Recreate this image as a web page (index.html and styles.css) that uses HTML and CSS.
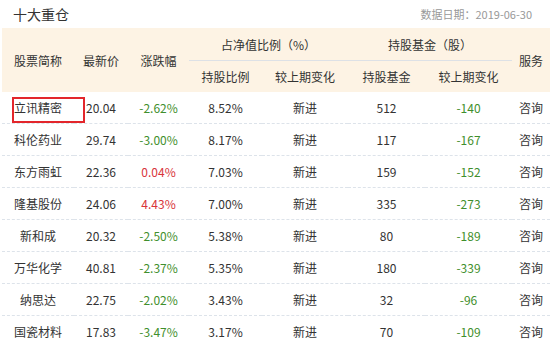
FILE: index.html
```html
<!DOCTYPE html>
<html lang="zh-CN">
<head>
<meta charset="utf-8">
<title>十大重仓</title>
<link rel="stylesheet" href="styles.css">
</head>
<body>
<div class="panel">
  <div class="top">
    <h2 class="title">十大重仓</h2>
    <span class="date">数据日期：2019-06-30</span>
  </div>
  <table class="grid">
    <colgroup>
      <col class="c1"><col class="c2"><col class="c3"><col class="c4"><col class="c5"><col class="c6"><col class="c7"><col class="c8">
    </colgroup>
    <thead>
      <tr class="h1">
        <th rowspan="2">股票简称</th>
        <th rowspan="2">最新价</th>
        <th rowspan="2">涨跌幅</th>
        <th colspan="2" class="grp">占净值比例（%）</th>
        <th colspan="2" class="grp">持股基金（股）</th>
        <th rowspan="2">服务</th>
      </tr>
      <tr class="h2">
        <th>持股比例</th>
        <th>较上期变化</th>
        <th>持股基金</th>
        <th>较上期变化</th>
      </tr>
    </thead>
    <tbody>
      <tr><td class="name"><span class="mark"></span>立讯精密</td><td>20.04</td><td class="down">-2.62%</td><td>8.52%</td><td>新进</td><td>512</td><td class="down">-140</td><td>咨询</td></tr>
      <tr><td class="name">科伦药业</td><td>29.74</td><td class="down">-3.00%</td><td>8.17%</td><td>新进</td><td>117</td><td class="down">-167</td><td>咨询</td></tr>
      <tr><td class="name">东方雨虹</td><td>22.36</td><td class="up">0.04%</td><td>7.03%</td><td>新进</td><td>159</td><td class="down">-152</td><td>咨询</td></tr>
      <tr><td class="name">隆基股份</td><td>24.06</td><td class="up">4.43%</td><td>7.00%</td><td>新进</td><td>335</td><td class="down">-273</td><td>咨询</td></tr>
      <tr><td class="name">新和成</td><td>20.32</td><td class="down">-2.50%</td><td>5.38%</td><td>新进</td><td>80</td><td class="down">-189</td><td>咨询</td></tr>
      <tr><td class="name">万华化学</td><td>40.81</td><td class="down">-2.37%</td><td>5.35%</td><td>新进</td><td>180</td><td class="down">-339</td><td>咨询</td></tr>
      <tr><td class="name">纳思达</td><td>22.75</td><td class="down">-2.02%</td><td>3.43%</td><td>新进</td><td>32</td><td class="down">-96</td><td>咨询</td></tr>
      <tr><td class="name">国瓷材料</td><td>17.83</td><td class="down">-3.47%</td><td>3.17%</td><td>新进</td><td>70</td><td class="down">-109</td><td>咨询</td></tr>
    </tbody>
  </table>
</div>
</body>
</html>
```
FILE: styles.css
```css
html, body {
  margin: 0;
  padding: 0;
  background: #ffffff;
}
body {
  font-family: "Noto Sans CJK SC", "Noto Sans", sans-serif;
  color: #333333;
  font-size: 12px;
}
.panel {
  width: 550px;
  overflow: hidden;
}
.top {
  display: flex;
  justify-content: space-between;
  align-items: center;
  height: 28px;
  padding: 0 18px 0 13px;
  box-sizing: border-box;
}
.title {
  margin: 0;
  font-size: 14px;
  font-weight: normal;
  line-height: 26px;
  color: #333333;
}
.date {
  font-size: 11px;
  color: #999999;
  line-height: 24px;
}
.grid {
  margin-left: 2px;
  width: 548px;
  table-layout: fixed;
  border-collapse: collapse;
}
.c1 { width: 72px; }
.c2 { width: 54px; }
.c3 { width: 61px; }
.c4 { width: 73px; }
.c5 { width: 86px; }
.c6 { width: 77px; }
.c7 { width: 87px; }
.c8 { width: 38px; }
thead th {
  background: #fdf3e4;
  font-weight: normal;
  text-align: center;
  padding: 0;
  white-space: nowrap;
}
.h1 th { height: 32px; }
.h2 th { height: 31px; }
th.grp {
  border-bottom: 1px solid #dde1e6;
}
tbody td {
  height: 31px;
  padding: 0;
  text-align: center;
  white-space: nowrap;
  border-bottom: 1px dashed #dde3ea;
}
tbody tr:last-child td {
  border-bottom: none;
}
td.name {
  position: relative;
}
.mark {
  position: absolute;
  left: 10px;
  top: 5px;
  width: 73px;
  height: 26px;
  border: 2px solid #e3262b;
  box-sizing: border-box;
}
.down { color: #3f8f2d; }
.up { color: #d8343a; }
```
